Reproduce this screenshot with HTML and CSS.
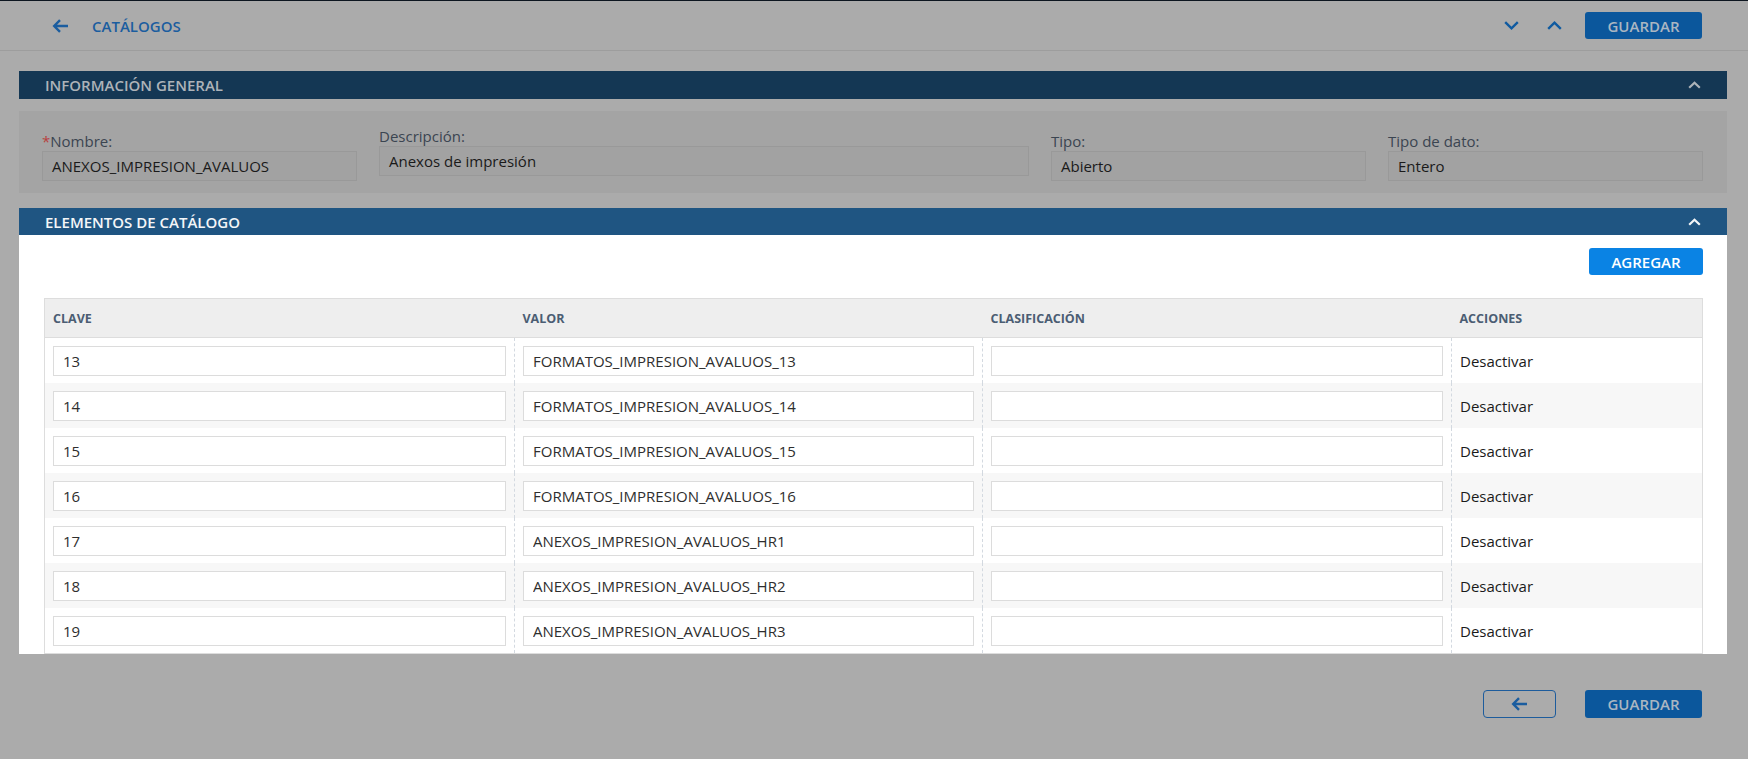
FILE: index.html
```html
<!DOCTYPE html>
<html lang="es">
  <head>
    <meta charset="utf-8" />
    <meta name="viewport" content="width=device-width, initial-scale=1" />
    <title>Catálogos</title>
    <link rel="stylesheet" href="styles.css">
  </head>
  <body>
    <header class="topbar">
      <a class="back" href="#">
        <svg width="17" height="14" viewBox="0 0 17 14"><path d="M16 7H2.5M8 1.2L2.2 7 8 12.8" fill="none" stroke="currentColor" stroke-width="2.4"/></svg>
      </a>
      <span class="title">CATÁLOGOS</span>
      <div class="topbar-actions">
        <button class="chev">
          <svg width="15" height="9" viewBox="0 0 15 9"><path d="M1.2 1.2L7.5 7.3 13.8 1.2" fill="none" stroke="currentColor" stroke-width="2.4"/></svg>
        </button>
        <button class="chev">
          <svg width="15" height="9" viewBox="0 0 15 9"><path d="M1.2 7.8L7.5 1.7 13.8 7.8" fill="none" stroke="currentColor" stroke-width="2.4"/></svg>
        </button>
        <button class="btn btn-save">GUARDAR</button>
      </div>
    </header>

    <main class="content">
      <section class="panel">
        <div class="panel-head panel-head--dim">
          <span>INFORMACIÓN GENERAL</span>
          <svg width="13" height="8" viewBox="0 0 13 8"><path d="M1.2 6.8L6.5 1.7 11.8 6.8" fill="none" stroke="currentColor" stroke-width="2.2"/></svg>
        </div>
        <div class="form-grid">
          <div class="field">
            <label><span class="req">*</span>Nombre:</label>
            <div class="field-input">ANEXOS_IMPRESION_AVALUOS</div>
          </div>
          <div class="field field--up">
            <label>Descripción:</label>
            <div class="field-input">Anexos de impresión</div>
          </div>
          <div class="field">
            <label>Tipo:</label>
            <div class="field-input">Abierto</div>
          </div>
          <div class="field">
            <label>Tipo de dato:</label>
            <div class="field-input">Entero</div>
          </div>
        </div>
      </section>

      <section class="panel panel--items">
        <div class="panel-head panel-head--items">
          <span>ELEMENTOS DE CATÁLOGO</span>
          <svg width="13" height="8" viewBox="0 0 13 8"><path d="M1.2 6.8L6.5 1.7 11.8 6.8" fill="none" stroke="currentColor" stroke-width="2.2"/></svg>
        </div>
        <div class="items-body">
          <div class="items-toolbar">
            <button class="btn btn-add">AGREGAR</button>
          </div>
          <table class="items">
            <colgroup>
              <col style="width: 470px" />
              <col style="width: 468px" />
              <col style="width: 469px" />
              <col />
            </colgroup>
            <thead>
              <tr>
                <th>CLAVE</th>
                <th>VALOR</th>
                <th>CLASIFICACIÓN</th>
                <th>ACCIONES</th>
              </tr>
            </thead>
            <tbody>
              <tr>
                <td><input value="13" /></td>
                <td><input value="FORMATOS_IMPRESION_AVALUOS_13" /></td>
                <td><input value="" /></td>
                <td>Desactivar</td>
              </tr>
              <tr>
                <td><input value="14" /></td>
                <td><input value="FORMATOS_IMPRESION_AVALUOS_14" /></td>
                <td><input value="" /></td>
                <td>Desactivar</td>
              </tr>
              <tr>
                <td><input value="15" /></td>
                <td><input value="FORMATOS_IMPRESION_AVALUOS_15" /></td>
                <td><input value="" /></td>
                <td>Desactivar</td>
              </tr>
              <tr>
                <td><input value="16" /></td>
                <td><input value="FORMATOS_IMPRESION_AVALUOS_16" /></td>
                <td><input value="" /></td>
                <td>Desactivar</td>
              </tr>
              <tr>
                <td><input value="17" /></td>
                <td><input value="ANEXOS_IMPRESION_AVALUOS_HR1" /></td>
                <td><input value="" /></td>
                <td>Desactivar</td>
              </tr>
              <tr>
                <td><input value="18" /></td>
                <td><input value="ANEXOS_IMPRESION_AVALUOS_HR2" /></td>
                <td><input value="" /></td>
                <td>Desactivar</td>
              </tr>
              <tr>
                <td><input value="19" /></td>
                <td><input value="ANEXOS_IMPRESION_AVALUOS_HR3" /></td>
                <td><input value="" /></td>
                <td>Desactivar</td>
              </tr>
            </tbody>
          </table>
        </div>
      </section>

      <div class="footer-actions">
        <button class="btn btn-back">
          <svg width="17" height="14" viewBox="0 0 17 14"><path d="M16 7H2.5M8 1.2L2.2 7 8 12.8" fill="none" stroke="currentColor" stroke-width="2.4"/></svg>
        </button>
        <button class="btn btn-save">GUARDAR</button>
      </div>
    </main>
  </body>
</html>
```

FILE: styles.css
```css
html,
body {
  margin: 0;
  background: #ababab;
  font-family: "Open Sans", "Noto Sans", sans-serif;
  color: #1e1e1e;
}

button {
  font-family: inherit;
  cursor: pointer;
}

/* top bar */
.topbar {
  height: 49px;
  display: flex;
  align-items: center;
  padding: 0 46px 0 52px;
  border-top: 1px solid #0d1620;
  border-bottom: 1px solid #9d9d9d;
}

.back {
  color: #1b5d9f;
  display: flex;
}

.title {
  margin-left: 23px;
  font-size: 15px;
  font-weight: 600;
  color: #1b5d9f;
}

.topbar-actions {
  margin-left: auto;
  display: flex;
  align-items: center;
}

.chev {
  background: none;
  border: 0;
  padding: 0;
  color: #0f5aa0;
  display: flex;
  margin-right: 28px;
}

.chev + .chev {
  margin-right: 23px;
}

.btn {
  border: 0;
  border-radius: 3px;
  font-size: 15px;
  font-weight: 600;
  height: 27px;
  padding: 0;
}

.btn-save {
  width: 117px;
  background: #0b579c;
  color: #aab6c2;
}

/* content */
.content {
  padding: 20px 21px 0 19px;
}

.panel-head {
  height: 28px;
  display: flex;
  align-items: center;
  justify-content: space-between;
  padding: 0 26px;
  font-size: 15px;
  font-weight: 600;
}

.panel-head--dim {
  background: #143754;
  color: #adb3b9;
}

.panel-head--items {
  height: 27px;
  margin-top: 15px;
  background: #1f5582;
  color: #f4f6f8;
}

.form-grid {
  margin-top: 12px;
  background: #a4a4a4;
  padding: 20px 24px 12px 23px;
  display: grid;
  grid-template-columns: 315px 650px 315px 1fr;
  column-gap: 22px;
  align-items: start;
}

.field label {
  display: block;
  font-size: 15px;
  line-height: 20px;
  color: #3b4551;
}

.req {
  color: #b8413f;
}

.field--up {
  margin-top: -5px;
}

.field-input {
  height: 28px;
  line-height: 28px;
  border: 1px solid #999;
  background: #a2a2a2;
  padding: 0 9px;
  font-size: 15px;
  color: #1a1a1a;
}

/* catalog items */
.items-body {
  background: #fff;
  height: 406px;
  padding: 13px 24px 0 25px;
  overflow: hidden;
}

.items-toolbar {
  display: flex;
  justify-content: flex-end;
}

.btn-add {
  width: 114px;
  background: #0a83e4;
  color: #fff;
}

.items {
  width: 100%;
  margin-top: 23px;
  border-collapse: collapse;
  table-layout: fixed;
  border: 1px solid #dddddd;
}

.items th {
  height: 38px;
  background: #eeeeee;
  border-bottom: 1px solid #dddddd;
  text-align: left;
  padding: 0 8px;
  font-size: 12.5px;
  font-weight: 700;
  color: #4b5d73;
}

.items td {
  height: 45px;
  padding: 0 8px;
  font-size: 15px;
  color: #1a1a1a;
}

.items td + td {
  border-left: 1px dashed #d3d9e0;
}

.items tbody tr:nth-child(even) {
  background: #f7f7f7;
}

.items input {
  width: 100%;
  box-sizing: border-box;
  height: 30px;
  border: 1px solid #dcdcdc;
  background: #fff;
  padding: 0 9px;
  font-family: inherit;
  font-size: 15px;
  color: #2e2e2e;
}

/* bottom actions */
.footer-actions {
  display: flex;
  justify-content: flex-end;
  align-items: center;
  gap: 29px;
  margin-top: 36px;
  padding-right: 25px;
}

.footer-actions .btn {
  height: 28px;
}

.btn-back {
  width: 73px;
  background: transparent;
  border: 1px solid #1d5c9c;
  border-radius: 4px;
  color: #1b5d9f;
  display: flex;
  align-items: center;
  justify-content: center;
}
```
